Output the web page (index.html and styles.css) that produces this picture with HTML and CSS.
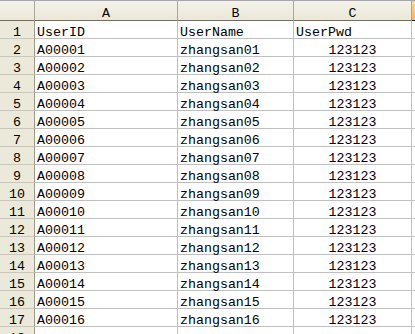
FILE: index.html
```html
<!DOCTYPE html>
<html>
<head>
<meta charset="utf-8">
<link rel="stylesheet" href="styles.css">
</head>
<body>
<div class="sheet">
  <div class="hdr corner"></div>
  <div class="hdr col">A</div>
  <div class="hdr col">B</div>
  <div class="hdr col">C</div>
  <div class="hdr col sel"></div>

  <div class="rh">1</div><div class="c">UserID</div><div class="c">UserName</div><div class="c">UserPwd</div><div class="c"></div>
  <div class="rh">2</div><div class="c">A00001</div><div class="c">zhangsan01</div><div class="c num">123123</div><div class="c"></div>
  <div class="rh">3</div><div class="c">A00002</div><div class="c">zhangsan02</div><div class="c num">123123</div><div class="c"></div>
  <div class="rh">4</div><div class="c">A00003</div><div class="c">zhangsan03</div><div class="c num">123123</div><div class="c"></div>
  <div class="rh">5</div><div class="c">A00004</div><div class="c">zhangsan04</div><div class="c num">123123</div><div class="c"></div>
  <div class="rh">6</div><div class="c">A00005</div><div class="c">zhangsan05</div><div class="c num">123123</div><div class="c"></div>
  <div class="rh">7</div><div class="c">A00006</div><div class="c">zhangsan06</div><div class="c num">123123</div><div class="c"></div>
  <div class="rh">8</div><div class="c">A00007</div><div class="c">zhangsan07</div><div class="c num">123123</div><div class="c"></div>
  <div class="rh">9</div><div class="c">A00008</div><div class="c">zhangsan08</div><div class="c num">123123</div><div class="c"></div>
  <div class="rh">10</div><div class="c">A00009</div><div class="c">zhangsan09</div><div class="c num">123123</div><div class="c"></div>
  <div class="rh">11</div><div class="c">A00010</div><div class="c">zhangsan10</div><div class="c num">123123</div><div class="c"></div>
  <div class="rh">12</div><div class="c">A00011</div><div class="c">zhangsan11</div><div class="c num">123123</div><div class="c"></div>
  <div class="rh">13</div><div class="c">A00012</div><div class="c">zhangsan12</div><div class="c num">123123</div><div class="c"></div>
  <div class="rh">14</div><div class="c">A00013</div><div class="c">zhangsan13</div><div class="c num">123123</div><div class="c"></div>
  <div class="rh">15</div><div class="c">A00014</div><div class="c">zhangsan14</div><div class="c num">123123</div><div class="c"></div>
  <div class="rh">16</div><div class="c">A00015</div><div class="c">zhangsan15</div><div class="c num">123123</div><div class="c"></div>
  <div class="rh">17</div><div class="c">A00016</div><div class="c">zhangsan16</div><div class="c num">123123</div><div class="c"></div>
  <div class="rh">18</div><div class="c"></div><div class="c"></div><div class="c"></div><div class="c"></div>
</div>
</body>
</html>
```

FILE: styles.css
```css
html, body {
  margin: 0;
  padding: 0;
  background: #ffffff;
  overflow: hidden;
}
.sheet {
  display: grid;
  grid-template-columns: 35px 143px 116px 118px 40px;
  grid-template-rows: 20px repeat(18, 18px);
  width: 452px;
  font-family: "Liberation Mono", "DejaVu Sans Mono", monospace;
  font-size: 13.3px;
  color: #000;
  border-top: 1px solid #a7a6aa;
  box-sizing: border-box;
}
.hdr {
  background: linear-gradient(#f4f2e8, #ebe8d8);
  border-right: 1px solid #aca899;
  border-bottom: 1px solid #716f64;
  box-sizing: border-box;
  text-align: center;
  line-height: 18px;
  padding-top: 4px;
  overflow: visible;
}
.hdr.sel {
  background: linear-gradient(#ffd8a0, #f9b35a);
  border-bottom: 1px solid #0a246a;
}
.rh {
  background: #ebe9d9;
  border-right: 1px solid #9d9a88;
  border-bottom: 1px solid #c9c7ba;
  box-sizing: border-box;
  text-align: center;
  line-height: 18px;
  padding-top: 3px;
  overflow: visible;
}
.c {
  border-right: 1px solid #c0c0c0;
  border-bottom: 1px solid #c0c0c0;
  box-sizing: border-box;
  padding-left: 2px;
  padding-top: 3px;
  line-height: 18px;
  white-space: nowrap;
  overflow: visible;
}
.c.num {
  text-align: center;
  padding-left: 0;
}
```
